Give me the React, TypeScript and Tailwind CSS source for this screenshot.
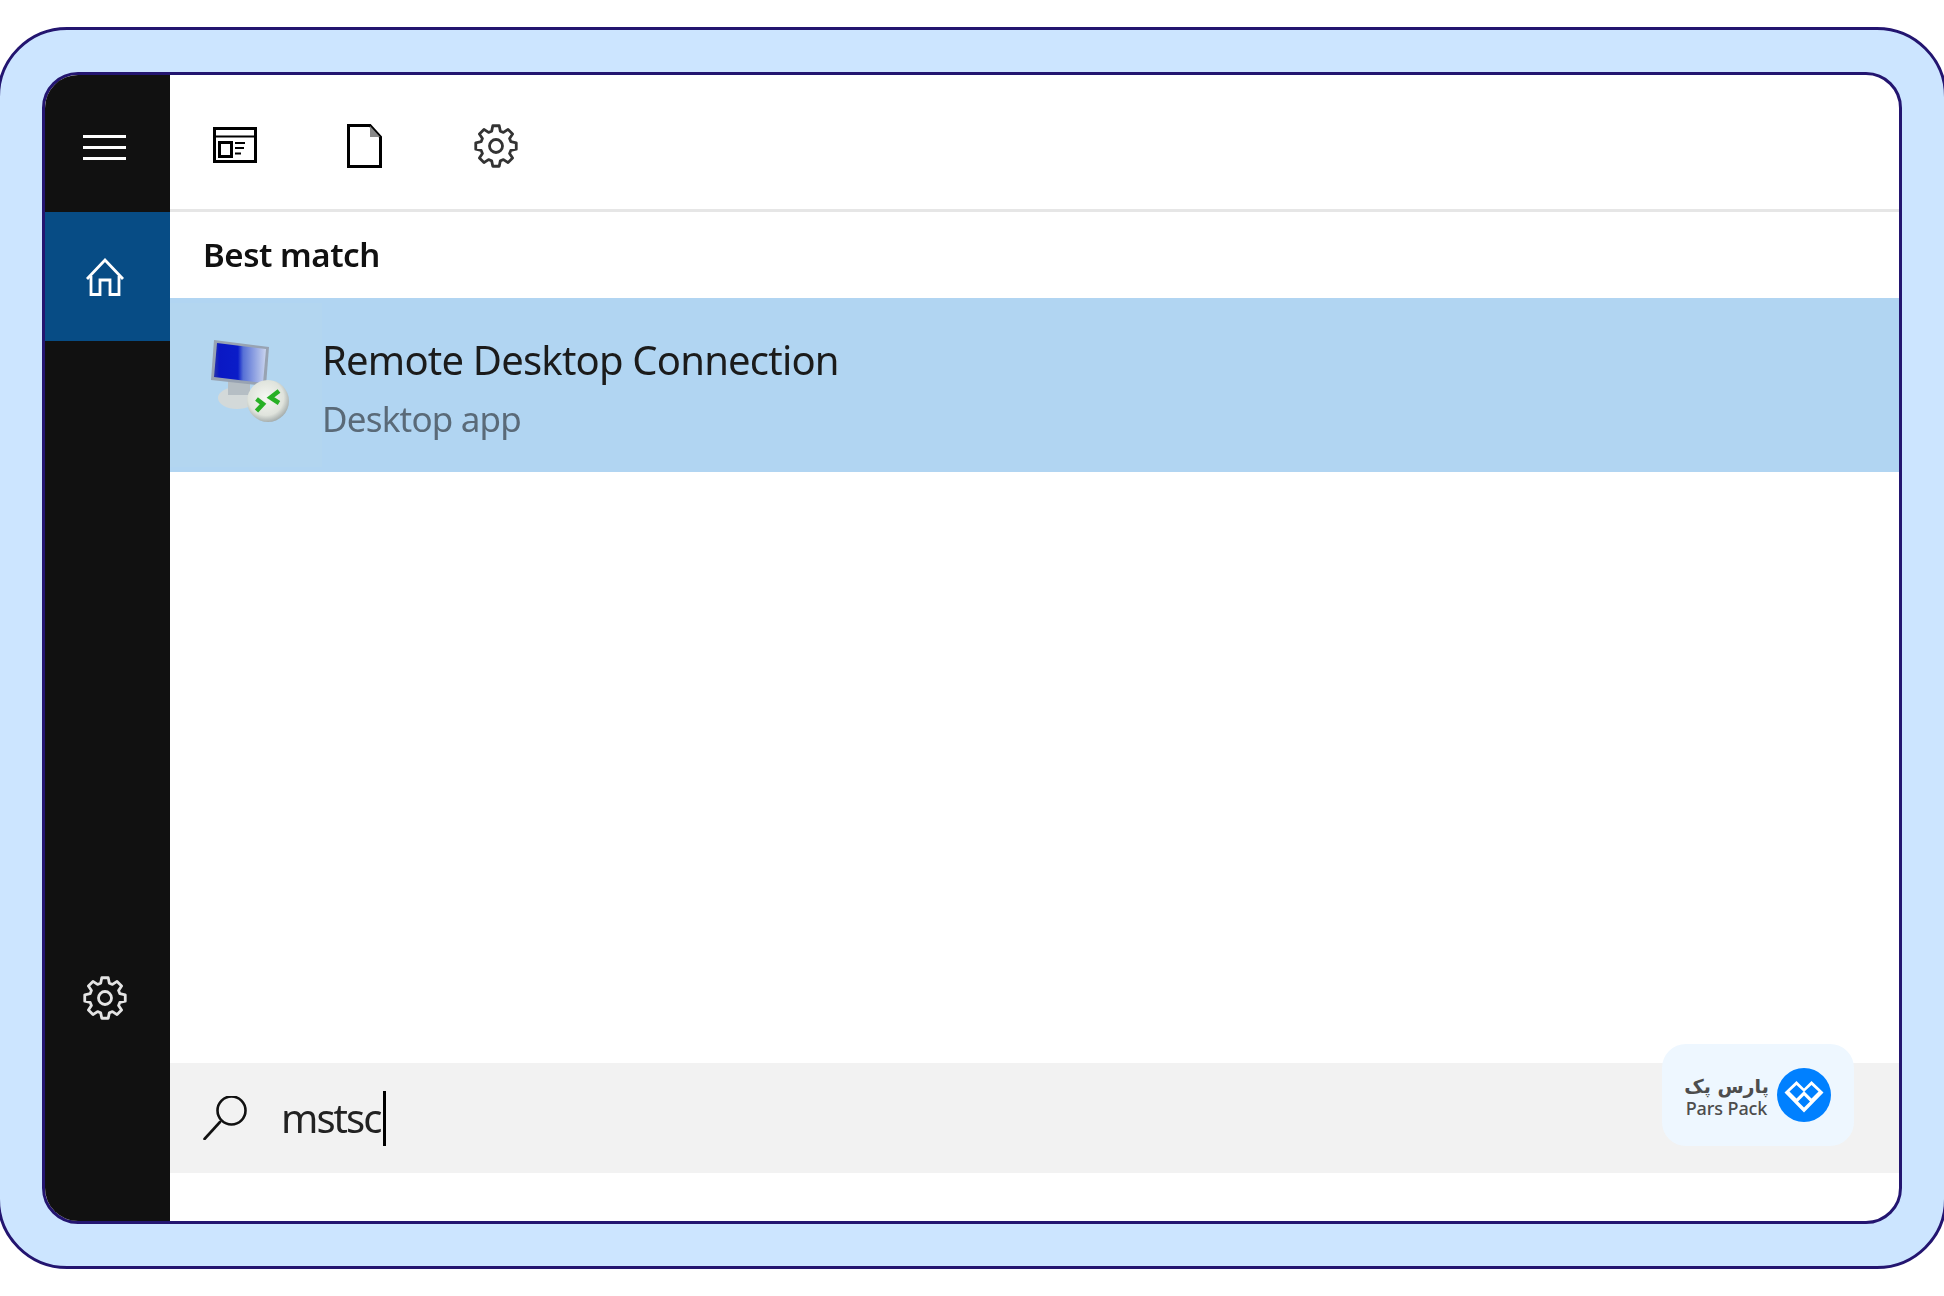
import React from 'react';

const font = { segoe: "font-['Noto_Sans','Open_Sans',sans-serif]" };

// n-tooth cog outline, same shape for the dark and light settings icons
function gearPath(c: number, outer: number, inner: number, teeth: number) {
  const pts: string[] = [];
  const step = (Math.PI * 2) / teeth;
  for (let i = 0; i < teeth; i++) {
    const a = i * step - Math.PI / 2;
    const spots: [number, number][] = [
      [inner, a - step * 0.36],
      [outer, a - step * 0.2],
      [outer, a + step * 0.2],
      [inner, a + step * 0.36],
    ];
    spots.forEach(([r, t]) => {
      pts.push(`${(c + r * Math.cos(t)).toFixed(2)} ${(c + r * Math.sin(t)).toFixed(2)}`);
    });
  }
  return `M${pts.join('L')}Z`;
}

const Gear: React.FC<{ className: string }> = ({ className }) => (
  <svg viewBox="0 0 44 44" fill="none" stroke="currentColor" strokeWidth="2.8" className={className}>
    <path d={gearPath(22, 20.5, 15.5, 8)} strokeLinejoin="round" />
    <circle cx="22" cy="22" r="6.5" />
  </svg>
);

const NewsIcon = () => (
  <svg viewBox="0 0 44 36" fill="none" stroke="#000" strokeWidth="3" className="w-[44px] h-[36px] -mt-[2px]">
    <rect x="1.5" y="1.5" width="41" height="33" />
    <path d="M2 9.5H42" strokeWidth="2" />
    <rect x="6.5" y="15.5" width="12" height="14" />
    <path d="M22 16H32M22 21H31M22 26.5H28" strokeWidth="2" />
  </svg>
);

const FileIcon = () => (
  <svg viewBox="0 0 35 44" fill="none" stroke="#000" strokeWidth="3" className="w-[35px] h-[44px]">
    <path d="M1.5 1.5H23L33.5 13V42.5H1.5Z" />
    <path d="M23 2V13H33Z" fill="#888" stroke="none" />
  </svg>
);

const HomeIcon = () => (
  <svg viewBox="0 0 38 38" fill="none" stroke="#fff" strokeWidth="2.8" className="w-[38px] h-[38px]">
    <path d="M1 21L19 2L37 21" />
    <path d="M5 18V36.5H14V22H24V36.5H33V18" />
  </svg>
);

const SearchIcon = () => (
  <svg viewBox="0 0 44 44" fill="none" stroke="#111" strokeWidth="2.6" className="w-[44px] h-[44px]">
    <circle cx="28.5" cy="14.5" r="14" />
    <path d="M17 26L1.5 43" strokeLinecap="round" />
  </svg>
);

const RemoteIcon = () => (
  <svg viewBox="0 0 80 90" className="w-[80px] h-[90px] blur-[0.7px]">
    <defs>
      <linearGradient id="screen" x1="0" x2="1" y1="0" y2="0">
        <stop offset="0" stopColor="#2a35a8" />
        <stop offset="0.1" stopColor="#0a18c4" />
        <stop offset="0.46" stopColor="#0a1cc8" />
        <stop offset="0.56" stopColor="#5670d6" />
        <stop offset="1" stopColor="#c9d4ee" />
      </linearGradient>
      <radialGradient id="disc" cx="0.45" cy="0.42" r="0.65">
        <stop offset="0" stopColor="#f6f7f2" />
        <stop offset="0.65" stopColor="#dfe3dc" />
        <stop offset="1" stopColor="#8f9899" />
      </radialGradient>
    </defs>
    <ellipse cx="27" cy="63" rx="19" ry="11" fill="#d3d9d9" />
    <path d="M18 46H40V60H18Z" fill="#b5bec4" />
    <path d="M4 5L59 12L56 51L1 45Z" fill="#98a3b2" />
    <path d="M7 8L56 14L53 48L4 42Z" fill="url(#screen)" />
    <circle cx="58" cy="66" r="21" fill="url(#disc)" />
    <path d="M46.5 64L53 69L46.5 76" fill="none" stroke="#27b024" strokeWidth="4.5" />
    <path d="M69 56L60.5 62.5L69 68" fill="none" stroke="#27b024" strokeWidth="4.5" />
  </svg>
);

const ParsPackBadge = () => (
  <div className="absolute right-[45px] bottom-[75px] w-[192px] h-[102px] rounded-[24px] bg-[#eef7ff] flex items-center pl-[24px] gap-[10px]">
    <div className="w-[81px] flex flex-col items-center">
      <span dir="rtl" className="font-['DejaVu_Sans',sans-serif] whitespace-nowrap text-[19px] font-bold leading-[26px] text-[#4d4d4d]">پارس پک</span>
      <span className="font-['Noto_Sans',sans-serif] whitespace-nowrap text-[18px] font-medium leading-[18px] tracking-[-0.1px] text-[#4d4d4d]">Pars Pack</span>
    </div>
    <svg viewBox="-27 -27 54 54" className="w-[54px] h-[54px]">
      <circle r="27" fill="#0080ff" />
      <path d="M-19.5 -2.5L-7.5 -14L0 -6.5L7.5 -14L19.5 -2.5L0 17.5Z" fill="#fff" />
      <path d="M-14.5 -3.5L-7.5 -10L-0.5 -3.5L-7.5 3.5Z M0.5 -3.5L7.5 -10L14.5 -3.5L7.5 3.5Z M0 0.5L6 6.5L0 12.5L-6 6.5Z" fill="#0080ff" />
    </svg>
  </div>
);

export default function App() {
  return (
    <div className={`w-[1944px] h-[1296px] overflow-hidden bg-white pt-[27px] ${font.segoe}`}>
      <div className="-ml-[3px] w-[1950px] h-[1242px] border-[3px] border-[#231570] rounded-[70px] bg-[#cce5ff] p-[42px]">
        <div className="h-full w-[1860px] border-[3px] border-[#231570] rounded-[36px] overflow-hidden bg-white flex">
          <aside className="w-[125px] shrink-0 bg-[#111111] flex flex-col">
            <div className="h-[137px] flex flex-col justify-center gap-[8px] pl-[38px] pt-[7px]">
              <span className="block w-[43px] h-[3px] bg-white" />
              <span className="block w-[43px] h-[3px] bg-white" />
              <span className="block w-[43px] h-[3px] bg-white" />
            </div>
            <div className="h-[129px] bg-[#074c85] flex items-center pl-[41px]">
              <HomeIcon />
            </div>
            <div className="flex-1 flex flex-col justify-end pl-[38px] pb-[201px]">
              <Gear className="w-[44px] h-[44px] text-[#e4e4e4]" />
            </div>
          </aside>

          <main className="relative flex-1 flex flex-col">
            <div className="h-[137px] border-b-[3px] border-[#e6e6e6] flex items-center pl-[43px] pt-[8px]">
              <NewsIcon />
              <div className="ml-[90px]"><FileIcon /></div>
              <div className="ml-[92px]"><Gear className="w-[44px] h-[44px] text-[#333333]" /></div>
            </div>
            <div className="h-[86px] flex items-center pl-[33px]">
              <h2 className="text-[33px] tracking-[-0.45px] font-semibold text-[#111111] blur-[0.5px]">Best match</h2>
            </div>
            <div className="h-[174px] bg-[#b1d5f2] flex">
              <div className="w-[152px] shrink-0 my-[5px] bg-[#b3d6f0] pl-[40px] pt-[32px]"><RemoteIcon /></div>
              <div className="pt-[34px]">
                <p className="text-[40px] leading-[56px] tracking-[-0.8px] text-[#1b1b1b] blur-[0.5px]">Remote Desktop Connection</p>
                <p className="text-[35px] leading-[50px] mt-[6px] tracking-[-0.8px] text-[#5a6a78] blur-[0.5px]">Desktop app</p>
              </div>
            </div>
            <div className="flex-1" />
            <div className="h-[110px] bg-[#f2f2f2] flex items-center pl-[33px]">
              <SearchIcon />
              <span className="ml-[34px] text-[40px] tracking-[-2px] text-[#222222] blur-[0.5px]">mstsc</span>
              <span className="ml-[3px] w-[3px] h-[55px] bg-black" />
            </div>
            <div className="h-[48px]" />
            <ParsPackBadge />
          </main>
        </div>
      </div>
    </div>
  );
}
